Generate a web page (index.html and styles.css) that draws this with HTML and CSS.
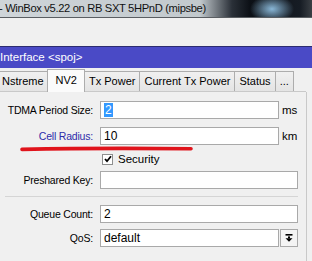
FILE: index.html
```html
<!DOCTYPE html>
<html lang="en">
<head>
  <meta charset="UTF-8" />
  <title>WinBox - Interface spoj</title>
  <link rel="stylesheet" href="styles.css">
</head>
<body>
  <div class="titlebar">
    <span class="title">- WinBox v5.22 on RB SXT 5HPnD (mipsbe)</span>
  </div>
  <div class="toolbar"></div>

  <div class="window">
    <div class="win-title">Interface &lt;spoj&gt;</div>

    <div class="tabs">
      <div class="tab">Nstreme</div>
      <div class="tab active">NV2</div>
      <div class="tab">Tx Power</div>
      <div class="tab">Current Tx Power</div>
      <div class="tab">Status</div>
      <div class="tab">...</div>
    </div>

    <div class="panel">
      <div class="row">
        <label class="lbl">TDMA Period Size:</label>
        <div class="field short"><span class="selected">2</span></div>
        <span class="unit">ms</span>
      </div>
      <div class="row">
        <label class="lbl changed">Cell Radius:</label>
        <div class="field short">10</div>
        <span class="unit">km</span>
      </div>
      <div class="row check-row">
        <span class="checkbox">
          <svg width="8" height="8" viewBox="0 0 8 8"><path d="M1 4 L3 6.2 L7 1.2" fill="none" stroke="#000" stroke-width="1.8"/></svg>
        </span>
        <span class="check-label">Security</span>
      </div>
      <div class="row before-sep">
        <label class="lbl">Preshared Key:</label>
        <div class="field"></div>
      </div>

      <div class="separator"></div>

      <div class="row tight">
        <label class="lbl">Queue Count:</label>
        <div class="field">2</div>
      </div>
      <div class="row">
        <label class="lbl">QoS:</label>
        <div class="field short">default</div>
        <button class="drop-btn">
          <svg width="8" height="8" viewBox="0 0 8 8">
            <rect x="0.5" y="0" width="7" height="1.6" fill="#000"/>
            <rect x="3" y="2.4" width="2" height="2" fill="#000"/>
            <path d="M0.5 4.2 H7.5 L4 7.8 Z" fill="#000"/>
          </svg>
        </button>
      </div>
    </div>

    <!-- red marker stroke drawn over the form -->
    <svg class="marker" width="312" height="10" viewBox="0 0 312 10">
      <path d="M22 5.4 Q100 3.8 191 4.8" fill="none" stroke="#e0141c" stroke-width="3.6" stroke-linecap="round"/>
    </svg>
  </div>
</body>
</html>
```

FILE: styles.css
```css
* {
  box-sizing: border-box;
  margin: 0;
  padding: 0;
}
body {
  width: 312px;
  height: 261px;
  overflow: hidden;
  font-family: "Liberation Sans", Arial, sans-serif;
  font-size: 11px;
  color: #000;
  background: #f0f0f0;
}
.titlebar {
  height: 18px;
  background:
    radial-gradient(ellipse 22px 14px at 272px 9px, rgba(150,200,235,0.9), rgba(60,90,120,0) 100%),
    linear-gradient(90deg, #cfd5d9 0, #c2c9cd 200px, #2a3038 232px, #0c1016 250px, #161c24 300px, #3a3f44 312px);
  border-bottom: 1px solid #5a5e62;
  display: flex;
  align-items: center;
}
.title {
  font-size: 11.2px;
  letter-spacing: -0.35px;
  color: #111;
  white-space: nowrap;
  margin-left: -1px;
  line-height: 17px;
}
.toolbar {
  height: 29px;
  background: #f0f0f0;
  border-bottom: 1px solid #2c2c70;
}
.window {
  position: relative;
}
.win-title {
  height: 21px;
  background: #4a4ac6;
  color: #fff;
  font-size: 11.5px;
  line-height: 21px;
  white-space: nowrap;
}
.tabs {
  display: flex;
  align-items: flex-end;
  height: 24px;
  margin-left: -3px;
  border-bottom: 1px solid #c9c9c9;
  width: 309px;
}
.tab {
  height: 20px;
  line-height: 19px;
  padding: 0 4px;
  border: 1px solid #adadad;
  border-bottom: none;
  margin-left: -1px;
  background: linear-gradient(#f0f0f0, #e4e4e4);
  white-space: nowrap;
}
.tab:first-child {
  padding: 0 3px 0 5px;
}
.tab.active {
  height: 23px;
  line-height: 20px;
  background: #fbfbfb;
  margin-bottom: -1px;
  padding: 0 7px 0 8px;
  position: relative;
}
.panel {
  width: 307px;
  height: 170px;
  border-right: 1px solid #c9c9c9;
  padding-top: 9px;
  padding-right: 8px;
}
.row {
  display: flex;
  align-items: center;
  height: 18px;
  margin-bottom: 8px;
}
.row.before-sep {
  margin-bottom: 7px;
}
.row.tight {
  margin-bottom: 6px;
}
.lbl {
  width: 93px;
  text-align: right;
  margin-right: 7px;
  white-space: nowrap;
  font-size: 10.5px;
  letter-spacing: -0.2px;
}
.lbl.changed {
  color: #2d2daa;
}
.field {
  flex: 1;
  height: 18px;
  background: #fff;
  border: 1px solid #a9a9a9;
  padding-left: 3px;
  line-height: 16px;
  font-size: 12px;
}
.field.short {
  flex: 0 0 179px;
}
.selected {
  background: #3399ff;
  color: #fff;
  padding: 0 1px;
}
.unit {
  padding-left: 3px;
  font-size: 11.5px;
}
.check-row {
  height: 16px;
  margin-top: -2px;
  margin-bottom: 4px;
  padding-left: 102px;
}
.checkbox {
  width: 11px;
  height: 11px;
  border: 1px solid #8e8f8f;
  background: #fff;
  display: flex;
  align-items: center;
  justify-content: center;
  margin-right: 5px;
}
.check-label {
  font-size: 11.5px;
}
.separator {
  height: 1px;
  background: #d5d5d5;
  margin: 2px 0 8px 5px;
}
.drop-btn {
  width: 18px;
  height: 18px;
  margin-left: 1px;
  border: 1px solid #a9a9a9;
  background: #f4f4f4;
  display: flex;
  align-items: center;
  justify-content: center;
}
.marker {
  position: absolute;
  left: 0;
  top: 97px;
}
```
